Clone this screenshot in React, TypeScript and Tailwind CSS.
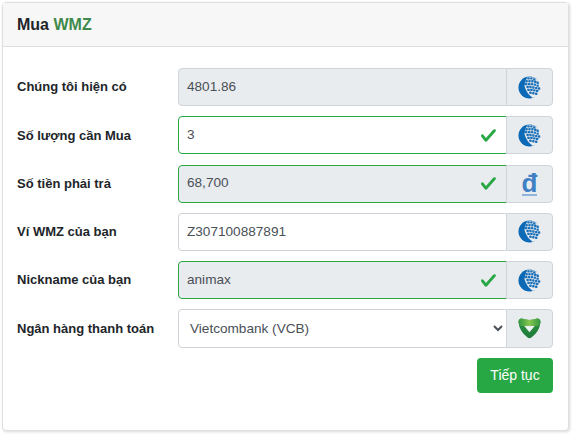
import type { ReactNode } from "react";

const CHECK =
  "M2.3 6.73.6 4.53c-.4-1.04.46-1.4 1.1-.8l1.1 1.4 3.4-3.8c.6-.63 1.6-.27 1.2.7l-4 4.6c-.43.5-.8.4-1.1.1z";

// dot grid on the right side of the WebMoney globe
const dots = [
  [11, 2.5], [14, 2.5], [17, 3.5],
  [9, 5.5], [12, 5.5], [15, 5.5], [18, 6], [20.5, 7],
  [8.5, 8.5], [11.5, 8.5], [14.5, 8.5], [17.5, 9], [20.5, 10],
  [10, 11.5], [13, 11.5], [16, 12], [19, 12.5], [22, 13],
  [11, 14.5], [14, 14.5], [17, 15], [20, 15.5],
  [13, 17.5], [16, 18], [19, 18.5],
];

function WmIcon() {
  return (
    <svg width="23" height="23" viewBox="0 0 24 24">
      <circle cx="12" cy="12" r="11.5" fill="#0b69b5" />
      <path d="M10 1 Q19 0 24 8 L24 17 Q21 22 15.5 23 Q8.5 18 6.8 10.5 Q7 5 10 1Z" fill="#e9ecef" />
      {dots.map(([x, y]) => (
        <rect key={`${x}-${y}`} x={x - 1.25} y={y - 1.25} width="2.5" height="2.5" rx="0.7" fill="#1b70b8" />
      ))}
    </svg>
  );
}

function DongIcon() {
  return (
    <span className="block border-b-2 border-[#8fb4dc] font-['Liberation_Sans',sans-serif] text-[26px] leading-[22px] font-bold text-[#4080c4]">
      đ
    </span>
  );
}

function VcbIcon() {
  return (
    <svg width="23" height="23" viewBox="0 0 24 24">
      <defs>
        <linearGradient id="vcbTop" x1="0" y1="0" x2="1" y2="0">
          <stop offset="0" stopColor="#2f9440" />
          <stop offset="0.5" stopColor="#86c64f" />
          <stop offset="1" stopColor="#2f9440" />
        </linearGradient>
        <linearGradient id="vcbBottom" x1="0" y1="0" x2="0" y2="1">
          <stop offset="0" stopColor="#2f9440" />
          <stop offset="1" stopColor="#1c7a3a" />
        </linearGradient>
      </defs>
      <path d="M4 1.5 Q12 4.5 20 1.5 Q23.5 1.5 23.5 5.5 Q22.5 15 14 21.5 Q12 23 10 21.5 Q1.5 15 0.5 5.5 Q0.5 1.5 4 1.5Z" fill="url(#vcbBottom)" />
      <path d="M4 1.5 Q12 4.5 20 1.5 Q23.5 1.5 23.5 5.5 L21.5 9.5 L2.5 9.5 L0.5 5.5 Q0.5 1.5 4 1.5Z" fill="url(#vcbTop)" />
      <path d="M6.5 9.5 L17.5 9.5 L12 16Z" fill="#eef1f2" />
    </svg>
  );
}

function Check() {
  return (
    <svg width="17" height="17" viewBox="0 0 8 8" className="shrink-0">
      <path d={CHECK} fill="#28a745" />
    </svg>
  );
}

function Row({
  label,
  value,
  icon,
  readOnly,
  valid,
}: {
  label: string;
  value: string;
  icon: ReactNode;
  readOnly?: boolean;
  valid?: boolean;
}) {
  return (
    <div className="flex items-center">
      <label className="w-[161px] shrink-0 text-[13px] font-bold text-[#212529]">{label}</label>
      <div className="flex h-[38px] flex-1">
        <div
          className={`flex flex-1 items-center justify-between rounded-l-[4px] border pl-2 pr-[9px] text-[13.6px] text-[#495057] ${
            valid ? "border-[#28a745]" : "border-[#ced4da]"
          } ${readOnly ? "bg-[#e9ecef]" : "bg-white"}`}
        >
          <span>{value}</span>
          {valid && <Check />}
        </div>
        <div className="-ml-px flex w-[47px] items-center justify-center rounded-r-[4px] border border-[#ced4da] bg-[#e9ecef]">
          {icon}
        </div>
      </div>
    </div>
  );
}

export default function App() {
  return (
    <div className="min-h-[435px] bg-white pl-[2px] pr-[4px] pt-[2px] font-['Liberation_Sans',Arial,sans-serif]">
      <div className="h-[429px] rounded-[4px] border border-[#dfdfdf] bg-white shadow-[1px_1px_3px_rgba(0,0,0,0.15)]">
        <div className="flex h-[44px] items-center border-b border-[#dfdfdf] bg-[#f7f7f7] px-[14px]">
          <h1 className="text-[16px] font-bold text-[#212529]">
            Mua <span className="text-[#3f8a4a]">WMZ</span>
          </h1>
        </div>
        <div className="flex flex-col gap-[10.25px] pl-[14px] pr-[15px] pt-[21px]">
          <Row label="Chúng tôi hiện có" value="4801.86" icon={<WmIcon />} readOnly />
          <Row label="Số lượng cần Mua" value="3" icon={<WmIcon />} valid />
          <Row label="Số tiền phải trả" value="68,700" icon={<DongIcon />} readOnly valid />
          <Row label="Ví WMZ của bạn" value="Z307100887891" icon={<WmIcon />} />
          <Row label="Nickname của bạn" value="animax" icon={<WmIcon />} readOnly valid />
          <div className="flex items-center">
            <label className="w-[161px] shrink-0 text-[13px] font-bold text-[#212529]">Ngân hàng thanh toán</label>
            <div className="flex h-[38.5px] flex-1">
              <select className="flex-1 rounded-l-[4px] border border-[#ced4da] bg-white pl-[7px] text-[13.6px] text-[#495057]">
                <option>Vietcombank (VCB)</option>
              </select>
              <div className="-ml-px flex w-[47px] items-center justify-center rounded-r-[4px] border border-[#ced4da] bg-[#e9ecef]">
                <VcbIcon />
              </div>
            </div>
          </div>
          <div className="flex justify-end">
            <button className="h-[35px] w-[76px] rounded-[4px] bg-[#28a745] text-[14px] text-white">Tiếp tục</button>
          </div>
        </div>
      </div>
    </div>
  );
}
